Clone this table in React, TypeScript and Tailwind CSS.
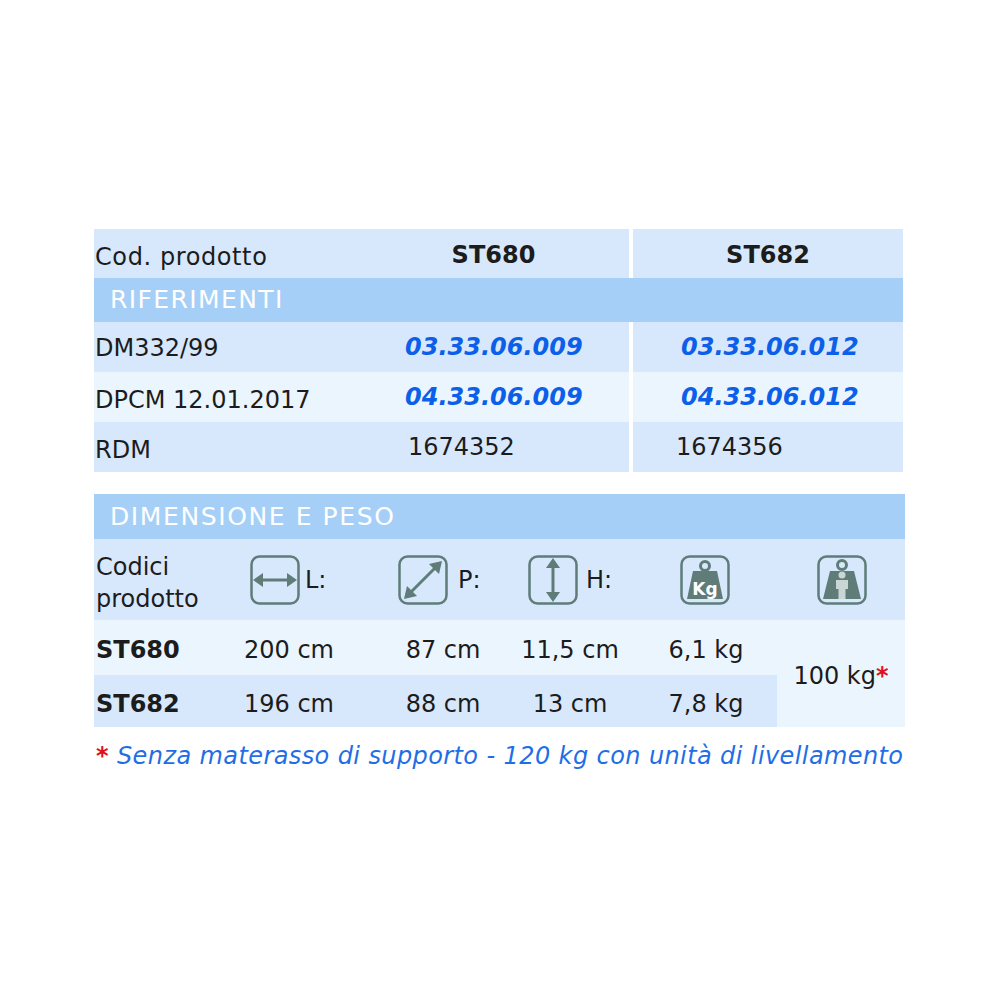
import React from 'react'

// Colour tokens taken from the reference
const ICON = '#5f7c79'

function BoxIcon({ children }: { children: React.ReactNode }) {
  return (
    <svg width="50" height="50" viewBox="0 0 50 50" className="shrink-0">
      <rect x="1.5" y="1.5" width="47" height="47" rx="8" fill="none" stroke={ICON} strokeWidth="2.5" />
      {children}
    </svg>
  )
}

function LengthIcon() {
  return (
    <BoxIcon>
      <line x1="10" y1="25" x2="40" y2="25" stroke={ICON} strokeWidth="3" />
      <polygon points="3,25 13,18 13,32" fill={ICON} />
      <polygon points="47,25 37,18 37,32" fill={ICON} />
    </BoxIcon>
  )
}

function DepthIcon() {
  return (
    <BoxIcon>
      <line x1="12" y1="38" x2="38" y2="12" stroke={ICON} strokeWidth="3" />
      <polygon points="6,44 9,31 19,41" fill={ICON} />
      <polygon points="44,6 41,19 31,9" fill={ICON} />
    </BoxIcon>
  )
}

function HeightIcon() {
  return (
    <BoxIcon>
      <line x1="25" y1="10" x2="25" y2="40" stroke={ICON} strokeWidth="3" />
      <polygon points="25,3 18,13 32,13" fill={ICON} />
      <polygon points="25,47 18,37 32,37" fill={ICON} />
    </BoxIcon>
  )
}

function KgIcon() {
  return (
    <BoxIcon>
      <circle cx="25" cy="11" r="4.5" fill="none" stroke={ICON} strokeWidth="3" />
      <path d="M13 16 H37 L43 44 H7 Z" fill={ICON} />
      <text x="25" y="40" textAnchor="middle" fill="#ffffff" fontFamily="'DejaVu Sans', sans-serif" fontWeight="700" fontSize="17">
        Kg
      </text>
    </BoxIcon>
  )
}

function LoadIcon() {
  return (
    <BoxIcon>
      <circle cx="25" cy="10" r="4.5" fill="none" stroke={ICON} strokeWidth="3" />
      <path d="M13 16 H37 L44 44 H6 Z" fill={ICON} />
      <circle cx="25" cy="20" r="3.5" fill="#c9d6d4" />
      <path d="M19 25 H31 V34 H28.5 V44 H21.5 V34 H19 Z" fill="#c9d6d4" />
    </BoxIcon>
  )
}

function Star() {
  return <span className="text-[#e0101c] font-bold">*</span>
}

export default function App() {
  return (
    <div className="w-[1000px] h-[1000px] bg-white text-[#1c1c1c] font-['DejaVu_Sans',sans-serif]">
      <div className="pt-[229px] pl-[94px] w-[905px]">
        {/* Riferimenti table */}
        <div className="grid grid-cols-[264px_271px_274px] text-[24px]">
          <div className="h-[49px] bg-[#d7e8fc] flex items-center pl-[1px] pt-[6px] tracking-[0.6px]">Cod. prodotto</div>
          <div className="h-[49px] bg-[#d7e8fc] flex items-center justify-center font-bold pt-[2px]">ST680</div>
          <div className="h-[49px] bg-[#d7e8fc] border-l-4 border-white flex items-center justify-center font-bold pt-[2px]">ST682</div>

          <div className="col-span-3 h-[44px] bg-[#a5cff7] text-white flex items-center pl-[16px] uppercase text-[25px] tracking-[1.4px]">Riferimenti</div>

          <div className="h-[50px] bg-[#d7e8fc] flex items-center pl-[1px] pt-[2px]">DM332/99</div>
          <div className="h-[50px] bg-[#d7e8fc] flex items-center pl-[47px] font-bold italic text-[#0c5fe8]">03.33.06.009</div>
          <div className="h-[50px] bg-[#d7e8fc] border-l-4 border-white flex items-center pl-[48px] font-bold italic text-[#0c5fe8]">03.33.06.012</div>

          <div className="h-[50px] bg-[#ebf5fe] flex items-center pl-[1px] pt-[6px]">DPCM 12.01.2017</div>
          <div className="h-[50px] bg-[#ebf5fe] flex items-center pl-[47px] font-bold italic text-[#0c5fe8]">04.33.06.009</div>
          <div className="h-[50px] bg-[#ebf5fe] border-l-4 border-white flex items-center pl-[48px] font-bold italic text-[#0c5fe8]">04.33.06.012</div>

          <div className="h-[50px] bg-[#d7e8fc] flex items-center pl-[1px] pt-[6px]">RDM</div>
          <div className="h-[50px] bg-[#d7e8fc] flex items-center pl-[50px]">1674352</div>
          <div className="h-[50px] bg-[#d7e8fc] border-l-4 border-white flex items-center pl-[43px]">1674356</div>
        </div>

        {/* Dimensione e peso table */}
        <div className="mt-[22px] grid grid-cols-[141px_146px_124px_130px_142px_128px] text-[24px]">
          <div className="col-span-6 h-[45px] bg-[#a5cff7] text-white flex items-center pl-[16px] uppercase text-[25px] tracking-[1.6px]">Dimensione e peso</div>

          <div className="h-[81px] bg-[#d7e8fc] flex flex-col justify-center pl-[2px] pt-[6px] leading-[32px]">
            <span>Codici</span>
            <span>prodotto</span>
          </div>
          <div className="h-[81px] bg-[#d7e8fc] flex items-center pl-[15px] gap-[5px]">
            <LengthIcon />
            <span>L:</span>
          </div>
          <div className="h-[81px] bg-[#d7e8fc] flex items-center pl-[17px] gap-[10px]">
            <DepthIcon />
            <span>P:</span>
          </div>
          <div className="h-[81px] bg-[#d7e8fc] flex items-center pl-[23px] gap-[8px]">
            <HeightIcon />
            <span>H:</span>
          </div>
          <div className="h-[81px] bg-[#d7e8fc] flex items-center pl-[45px]">
            <KgIcon />
          </div>
          <div className="h-[81px] bg-[#d7e8fc] flex items-center pl-[40px]">
            <LoadIcon />
          </div>

          <div className="h-[55px] bg-[#ebf5fe] flex items-center pl-[2px] pt-[5px] font-bold">ST680</div>
          <div className="h-[55px] bg-[#ebf5fe] flex items-center justify-center pt-[5px] pr-[38px]">200 cm</div>
          <div className="h-[55px] bg-[#ebf5fe] flex items-center justify-center pt-[5px]">87 cm</div>
          <div className="h-[55px] bg-[#ebf5fe] flex items-center justify-center pt-[5px]">11,5 cm</div>
          <div className="h-[55px] bg-[#ebf5fe] flex items-center justify-center pt-[5px]">6,1 kg</div>
          <div className="row-span-2 bg-[#ebf5fe] flex items-center justify-center pt-[4px]">
            <span>
              100 kg<Star />
            </span>
          </div>

          <div className="h-[52px] bg-[#d7e8fc] flex items-center pl-[2px] pt-[5px] font-bold">ST682</div>
          <div className="h-[52px] bg-[#d7e8fc] flex items-center justify-center pt-[5px] pr-[38px]">196 cm</div>
          <div className="h-[52px] bg-[#d7e8fc] flex items-center justify-center pt-[5px]">88 cm</div>
          <div className="h-[52px] bg-[#d7e8fc] flex items-center justify-center pt-[5px]">13 cm</div>
          <div className="h-[52px] bg-[#d7e8fc] flex items-center justify-center pt-[5px]">7,8 kg</div>
        </div>

        <div className="mt-[11px] pl-[2px] text-[24px] italic text-[#1f6ee6] whitespace-nowrap tracking-[0.4px]">
          <Star /> Senza materasso di supporto - 120 kg con unità di livellamento
        </div>
      </div>
    </div>
  )
}
